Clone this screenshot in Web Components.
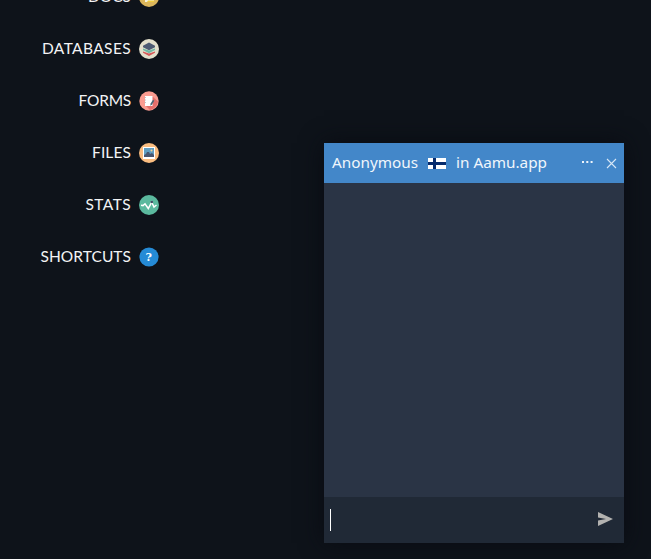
<!DOCTYPE html>
<html lang="en"><head><meta charset="utf-8"><title>Aamu.app</title>
<style>html,body{margin:0;height:100%;overflow:hidden;background:#0e131a}</style></head><body>
<app-shell></app-shell>
<script>
const define=(name,html,init)=>customElements.define(name,class extends HTMLElement{
  constructor(){super();this.attachShadow({mode:'open'}).innerHTML=html;}
  connectedCallback(){if(init)init(this,this.shadowRoot);}
});
// Distributes letter spacing so a label fills its given width.
define('fit-text','<style>:host{display:inline-block;white-space:pre;flex:none}span{display:inline-block}</style><span></span>',(el,r)=>{
  const s=r.querySelector('span'),w=+el.getAttribute('width');
  s.textContent=el.getAttribute('text');
  s.style.letterSpacing=((w-s.getBoundingClientRect().width)/(s.textContent.length))+'px';
  el.style.width=w+'px';
});
const icons={
docs:'<circle cx="10" cy="10" r="10" fill="#dcb65b"/><path d="M6 3h9v12H6z" fill="#f7f3df"/><path d="M7 12.5l5-2.5h2v3H8z" fill="#3e4957"/><path d="M9 13.5h6v1.5H8z" fill="#f0ce3d"/>',
databases:'<circle cx="10" cy="10" r="10" fill="#e3e0cc"/><path d="M4 12.6l6 2 6-2v1.2l-6 3.2-6-3.2z" fill="#d75a5a"/><path d="M4 9.6l6 2 6-2v1.4l-6 3.2L4 11z" fill="#70b9a5"/><path d="M4 6.8l6-3.2 6 3.2v1.4l-6 3-6-3z" fill="#4d5b73"/>',
forms:'<circle cx="10" cy="10" r="9.7" fill="#fb9c91"/><path d="M13.5 5.5l5.5 5A9.5 9.5 0 0 1 11 19l-4-4z" fill="#e46f6b"/><path d="M6 5h7.5v10H6z" fill="#fff"/><path d="M5.8 6.5h1M5.8 9h1M5.8 11.5h1" stroke="#a8bac3"/><path d="M11.3 14.8l.3-2.2 2.4-3.8 1.3.9-2.4 4z" fill="#466777"/>',
files:'<circle cx="10" cy="10" r="10" fill="#fabd80"/><path d="M4 4h12v12H4z" fill="#fff"/><path d="M5 5h10v9H5z" fill="#609fc3"/><path d="M5 12l2-1 1-2h2l1 2 2-1 2 2v2H5z" fill="#49566f"/><circle cx="12.5" cy="7.5" r="1" fill="#f2d69d"/>',
stats:'<circle cx="10" cy="10" r="10" fill="#5bb99e"/><path d="M2 10.2l2 .4L6 8.8l3.3 4.7 3.4-6.3 2.3 4.8 2.5-2" fill="none" stroke="#fff" stroke-width="1.5"/><circle cx="12.8" cy="7" r="1.3" fill="#414e65"/>',
shortcuts:'<circle cx="10" cy="10" r="9.6" fill="#258bd6"/><text x="9.7" y="14" text-anchor="middle" fill="#fff" font-family="DejaVu Serif,serif" font-size="11" font-weight="700">?</text>'
};
define('nav-item',`<style>:host{display:flex;align-items:center;justify-content:flex-end;gap:8px;height:52px;color:#f3f4f5;font:15.5px/20px Lato,sans-serif}::slotted(*){margin-top:-2px}svg{display:block;width:20px;height:20px;flex:none}</style><slot></slot><svg viewBox="0 0 20 20"></svg>`,(el,r)=>r.querySelector('svg').innerHTML=icons[el.getAttribute('icon')]);
define('side-nav',`<style>:host{display:block;width:159px;margin-top:-29px;flex:none}</style>${[['DOCS',43],['DATABASES',89],['FORMS',52.5],['FILES',39],['STATS',45.5],['SHORTCUTS',90.5]].map(([t,w])=>`<nav-item icon="${t.toLowerCase()}"><fit-text text="${t}" width="${w}"></fit-text></nav-item>`).join('')}`);
define('chat-header',`<style>:host{display:flex;box-sizing:border-box;align-items:center;height:40px;padding:0 7px 0 8px;background:#4387c9;color:#f0f6fc;font:15.3px/24px "Noto Sans",sans-serif}fit-text{margin-top:-2px}.flag{width:18px;height:11px;margin:0 10px 0 10px}.dots{width:11px;height:2px;margin:0 13px 2px auto}.close{width:11px;height:11px}svg{display:block}</style>
<fit-text text="Anonymous" width="86"></fit-text>
<svg class="flag" viewBox="0 0 18 11" shape-rendering="crispEdges"><path d="M0 0h18v11H0z" fill="#fff"/><path d="M5 0h3v11H5zM0 4h18v3H0z" fill="#062b6d"/></svg>
<fit-text text="in Aamu.app" width="91"></fit-text>
<svg class="dots" viewBox="0 0 11 2"><path d="M0 0h2v2H0zM4.3 0h2v2h-2zM8.6 0h2v2h-2z" fill="#edf4fb"/></svg>
<svg class="close" viewBox="0 0 11 11"><path d="M1 1l9 9M10 1l-9 9" stroke="#d7e7f6" stroke-width="1.1"/></svg>`);
define('chat-input',`<style>:host{display:flex;box-sizing:border-box;align-items:center;justify-content:space-between;height:46px;padding:0 11px 0 6px;background:#202936}i{width:1px;height:22px;background:#fff}svg{display:block;width:15px;height:14px;margin-top:-2px}</style><i></i><svg viewBox="0 0 15 14"><path d="M0 0l15 7-15 7V8.4L8 7 0 5.6z" fill="#b3b2b0"/></svg>`);
define('chat-window',`<style>:host{display:flex;flex-direction:column;width:300px;height:400px;background:#2a3445;box-shadow:0 0 22px #090b12}main{flex:1}</style><chat-header></chat-header><main></main><chat-input></chat-input>`);
define('app-shell',`<style>:host{display:flex;justify-content:space-between;box-sizing:border-box;width:651px;height:559px;padding-right:27px;overflow:hidden;background:#0e131a}chat-window{margin-top:143px;flex:none}</style><side-nav></side-nav><chat-window></chat-window>`);
</script></body></html>
